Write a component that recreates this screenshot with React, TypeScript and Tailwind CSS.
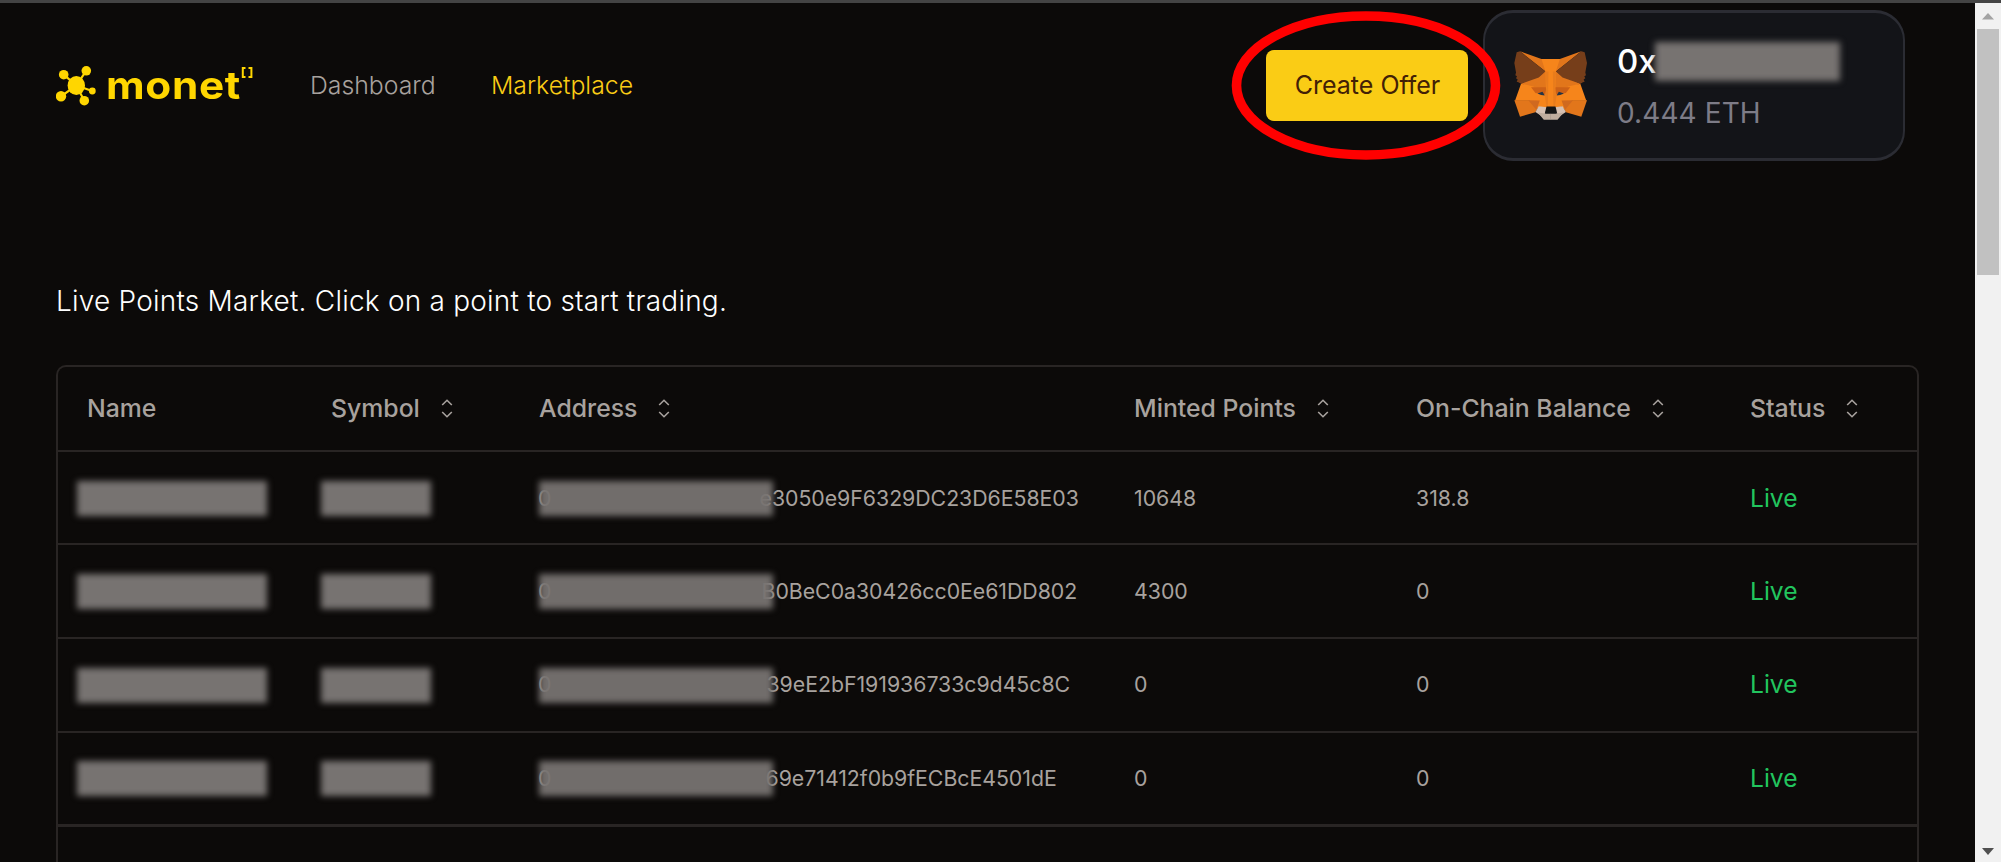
import type { ReactNode } from 'react';

type Row = { suffix: string; offset: string; minted: string; balance: string; height: string };

const GRID = 'grid grid-cols-[244px_208px_595px_282px_334px_1fr] items-center pl-[29px]';

const ROWS: Row[] = [
  { suffix: 'e3050e9F6329DC23D6E58E03', offset: 'ml-[207px]', minted: '10648', balance: '318.8', height: 'h-[93px] border-b-2 pt-[2px]' },
  { suffix: 'B0BeC0a30426cc0Ee61DD802', offset: 'ml-[209px]', minted: '4300', balance: '0', height: 'h-[94px] border-b-2 pt-px' },
  { suffix: '39eE2bF191936733c9d45c8C', offset: 'ml-[214px]', minted: '0', balance: '0', height: 'h-[94px] border-b-2' },
  { suffix: '69e71412f0b9fECBcE4501dE', offset: 'ml-[213px]', minted: '0', balance: '0', height: 'h-[94px] border-b-[3px]' },
];

function Logo() {
  return (
    <div className="flex h-[40px] w-[198px] items-start">
      <svg width="42" height="40" viewBox="0 0 42 40" fill="#ffd600" stroke="#ffd600" className="shrink-0">
        <path d="M20.3 19.5 7.7 8.7M20.3 19.5 30.3 4.7M20.3 19.5 5 30.3M20.3 19.5 28.3 34.7M20.3 19.5 36.3 25" strokeWidth="2.2" />
        <g stroke="none">
          <ellipse cx="20.3" cy="19.5" rx="8.7" ry="9.6" />
          <circle cx="7.7" cy="8.7" r="4.8" />
          <circle cx="30.3" cy="4.8" r="4.8" />
          <circle cx="5" cy="30.3" r="5.2" />
          <circle cx="28.3" cy="34.7" r="4.8" />
          <circle cx="36.3" cy="25" r="3.4" />
        </g>
      </svg>
      <span className="ml-[8px] w-[134px] shrink-0 origin-left scale-x-110 text-[38.5px] leading-[39px] font-bold tracking-[0.6px] text-[#ffd600]">
        monet
      </span>
      <svg width="14" height="13" viewBox="0 0 14 13" fill="none" stroke="#ffd600" strokeWidth="2" className="shrink-0">
        <path d="M5.5 2H2.8V11H5.5M8.5 2H11.4V11H8.5" />
      </svg>
    </div>
  );
}

function FoxHalf() {
  return (
    <>
      <polygon fill="#e2761b" points="62,67 126,90 154,90 154,200 105,180 65,163 138,127" />
      <path fill="#763e1a" d="M62 67 138 127 118 145 65 163 57 159 52 157 55 151 50 147 53 141 48 138 50 130 45 102 52 70Z" />
      <polygon fill="#f6851b" points="65,163 105,172 130,176 154,200 154,234 142,236 120,232 109,243 90,214 47,214" />
      <polygon fill="#e2761b" points="45,212 90,212 112,240 108,248 62,261" />
      <polygon fill="#d0691f" points="87,212 121,213 111,241" />
      <polygon fill="#e2761b" points="138,127 101,174 142,177" />
      <polygon fill="#cd6116" points="95,174 140,174 141,196 108,191" />
      <polygon fill="#233447" points="114,192 129,187 136,198 125,197" />
      <polygon fill="#d7c1b3" points="118,230 142,233 137,254 127,260 108,247" />
      <polygon fill="#c0ad9e" points="115,249 137,252 154,252 154,270 133,270" />
    </>
  );
}

function Fox() {
  return (
    <svg width="73" height="69" viewBox="44 66 218 205" preserveAspectRatio="none" className="shrink-0">
      <FoxHalf />
      <g transform="translate(307 0) scale(-1 1)">
        <FoxHalf />
      </g>
      <polygon fill="#f6851b" points="126,90 181,90 169,127 166,232 141,232 138,127" />
      <polygon fill="#e87c1c" points="138,127 147,127 145,232 141,232 136,198 141,175" />
      <polygon fill="#e87c1c" points="169,127 160,127 162,232 166,232 171,198 166,175" />
      <polygon fill="#161616" points="141,231 168,231 173,252 136,252" />
    </svg>
  );
}

function Sort() {
  return (
    <svg width="12" height="19" viewBox="0 0 12 19" fill="none" stroke="#a8a29e" strokeWidth="1.6" className="ml-[21px] shrink-0">
      <path d="M1.2 6 6 1.3 10.8 6M1.2 13 6 17.7 10.8 13" />
    </svg>
  );
}

function Head({ children, sort = true }: { children: ReactNode; sort?: boolean }) {
  return (
    <div className="flex items-center text-[24.8px] leading-none font-medium whitespace-nowrap text-[#a8a29e]">
      {children}
      {sort && <Sort />}
    </div>
  );
}

export default function App() {
  return (
    <div className="flex h-[862px] w-[2001px] flex-col overflow-hidden bg-[#0c0a09] font-['Inter',sans-serif]">
      <div className="h-[3px] shrink-0 bg-[#444444]" />
      <div className="flex min-h-0 flex-1">
        <main className="flex w-[1975px] flex-col pr-[56px] pl-[56px]">
          <header className="mt-[7px] flex h-[151px] shrink-0 items-center">
            <Logo />
            <nav className="ml-[56px] flex items-center gap-[55px] text-[24.8px] leading-none font-light">
              <a className="w-[126px] text-[#a8a29e]">Dashboard</a>
              <a className="text-[#facc15]">Marketplace</a>
            </nav>
            <div className="relative ml-auto">
              <button className="flex h-[71px] w-[202px] items-center justify-center rounded-[8px] bg-[#facc15] pl-px text-[25px] leading-none text-[#422006]">
                Create Offer
              </button>
              <svg width="270" height="150" viewBox="0 0 270 150" fill="none" className="absolute -top-[39px] -left-[35px] z-10 max-w-none">
                <ellipse cx="135" cy="74.5" rx="129.5" ry="69.5" stroke="#ff0000" strokeWidth="9.6" />
              </svg>
            </div>
            <div className="mr-[14px] ml-[15px] flex h-[151px] w-[422px] items-center rounded-[30px] border-x-2 border-y-[3px] border-[#2b2c33] bg-[#131418] pl-[29px]">
              <Fox />
              <div className="ml-[30px] flex flex-col pt-[3px]">
                <div className="relative flex h-[52px] items-center text-[33px] leading-none font-medium text-white">
                  0x
                  <span className="absolute top-[7px] left-[38px] h-[39px] w-[185px] bg-[#777371] blur-[3px]" />
                </div>
                <div className="flex h-[52px] items-center text-[28px] leading-none tracking-[0.1px] text-[#7d7c87]">0.444 ETH</div>
              </div>
            </div>
          </header>

          <h1 className="mt-[120px] h-[40px] shrink-0 text-[28px] leading-[40px] font-light tracking-[0.22px] text-white">
            Live Points Market. Click on a point to start trading.
          </h1>

          <section className="mt-[44px] flex-1 rounded-t-[10px] border-2 border-b-0 border-[#292524]">
            <div className={`${GRID} h-[85px] border-b-2 border-[#292524]`}>
              <Head sort={false}>Name</Head>
              <Head>Symbol</Head>
              <Head>Address</Head>
              <Head>Minted Points</Head>
              <Head>On-Chain Balance</Head>
              <Head>Status</Head>
            </div>
            {ROWS.map((r) => (
              <div key={r.suffix} className={`${GRID} ${r.height} border-[#292524] text-[21.3px] leading-none text-[#a8a29e]`}>
                <div className="-ml-[10px] h-[35px] w-[190px] bg-[#777371] blur-[3px]" />
                <div className="-ml-[10px] h-[35px] w-[110px] bg-[#777371] blur-[3px]" />
                <div className="relative flex h-[35px] items-center">
                  <span className="-ml-px w-px">0</span>
                  <span className={`${r.offset} pl-[13.5px] tracking-[-0.03px]`}>{r.suffix}</span>
                  <span className="absolute top-0 left-0 h-[35px] w-[234px] bg-[#777371]/95 blur-[3px]" />
                </div>
                <div>{r.minted}</div>
                <div>{r.balance}</div>
                <div className="-mt-px text-[24.6px] leading-none text-[#22c55e]">Live</div>
              </div>
            ))}
          </section>
        </main>
        <aside className="flex w-[26px] flex-col items-center bg-[#f1f1f1]">
          <svg width="12" height="7" viewBox="0 0 12 7" className="mt-[10px]">
            <path d="M0 6.5 6 0 12 6.5Z" fill="#a3a3a3" />
          </svg>
          <div className="mt-[9px] h-[246px] w-[22px] bg-[#c1c1c1]" />
          <svg width="12" height="7" viewBox="0 0 12 7" className="mt-auto mb-[7px]">
            <path d="M0 0H12L6 7Z" fill="#505050" />
          </svg>
        </aside>
      </div>
    </div>
  );
}
